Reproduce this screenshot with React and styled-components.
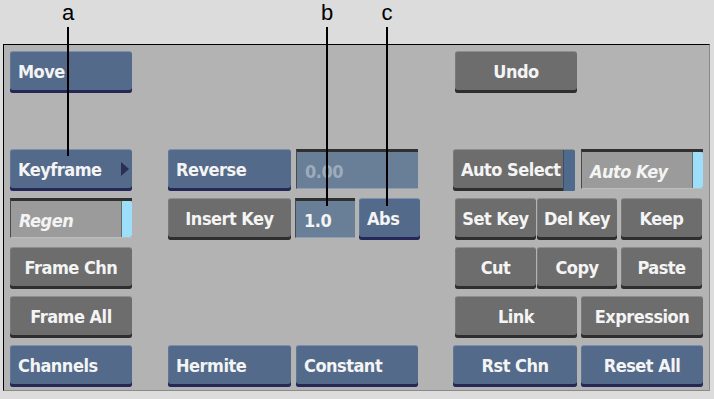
import styled, { createGlobalStyle, css } from 'styled-components';

const GlobalStyle = createGlobalStyle`
  html, body {
    margin: 0;
    padding: 0;
    background: #dcdcdc;
  }
  body {
    width: 714px;
    height: 399px;
    overflow: hidden;
    font-family: 'DejaVu Sans Condensed', 'DejaVu Sans', sans-serif;
  }
`;

const Page = styled.div`
  position: relative;
  width: 714px;
  height: 399px;
  padding: 44px 0 0 3px;
  box-sizing: border-box;
`;

// callout letter with its leader line, drawn over the panel
const Callout = styled.div`
  position: absolute;
  z-index: 2;
  top: 0;
  left: ${(p) => p.x}px;
  width: 0;
  height: ${(p) => p.len}px;

  span {
    position: absolute;
    top: 2px;
    left: -6px;
    width: 12px;
    text-align: center;
    font-family: 'Liberation Sans', Arial, sans-serif;
    font-size: 22px;
    line-height: 22px;
    color: #000;
  }

  &::after {
    content: '';
    position: absolute;
    left: -1px;
    top: 27px;
    bottom: 0;
    width: 2px;
    background: #000;
  }
`;

const Panel = styled.div`
  width: 707px;
  height: 347px;
  box-sizing: border-box;
  border: 1px solid #000;
  border-right-color: #8a8a8a;
  border-bottom-color: #8a8a8a;
  background: #b3b3b3;
  display: flex;
  padding: 6px 0 0 6px;
`;

const Group = styled.div`
  display: grid;
  grid-template-rows: repeat(7, 42px);
  row-gap: 7px;
  width: ${(p) => p.w}px;
  margin-left: ${(p) => p.ml || 0}px;
`;

const Row = styled.div`
  display: flex;
  gap: ${(p) => (p.gap === undefined ? 4 : p.gap)}px;
  grid-row: ${(p) => p.row};
  padding-left: ${(p) => p.pl || 0}px;
`;

const textBase = css`
  font-family: 'DejaVu Sans Condensed', 'DejaVu Sans', sans-serif;
  font-weight: bold;
  font-size: 18px;
  letter-spacing: -0.5px;
  color: #f4f4f4;
  white-space: nowrap;
`;

const Button = styled.div`
  ${textBase};
  position: relative;
  box-sizing: border-box;
  width: ${(p) => p.w}px;
  height: 42px;
  display: flex;
  align-items: center;
  justify-content: ${(p) => (p.left ? 'flex-start' : 'center')};
  padding: ${(p) => (p.left ? '0 0 3px 8px' : '0 0 3px 0')};
  margin-left: ${(p) => p.ml || 0}px;
  border-radius: 3px;
  background: ${(p) => (p.blue ? '#536a8a' : '#6d6d6d')};
  border-top: 1px solid ${(p) => (p.blue ? '#7a90ad' : '#8e8e8e')};
  box-shadow: inset 0 -3px 0 ${(p) => (p.blue ? '#252856' : '#2e2e2e')},
    inset 1px 0 0 ${(p) => (p.blue ? '#60779a' : '#7a7a7a')};
  grid-row: ${(p) => p.row || 'auto'};
`;

const Arrow = styled.span`
  position: absolute;
  right: 3px;
  top: 12px;
  width: 0;
  height: 0;
  border-top: 7px solid transparent;
  border-bottom: 7px solid transparent;
  border-left: 8px solid #2a3054;
`;

const Strip = styled.span`
  position: absolute;
  top: 0;
  right: 0;
  bottom: 0;
  width: ${(p) => p.w}px;
  background: ${(p) => p.color};
  border-left: 1px solid ${(p) => p.edge};
  border-radius: 0 2px 2px 0;
`;

const Field = styled.div`
  ${textBase};
  position: relative;
  box-sizing: border-box;
  width: ${(p) => p.w}px;
  height: 40px;
  display: flex;
  align-items: center;
  padding: 2px 0 0 ${(p) => p.pl || 8}px;
  background: ${(p) => (p.grey ? '#9b9b9b' : '#687f97')};
  border-top: 3px solid #303030;
  border-left: 1px solid #4a4a4a;
  border-bottom: 1px solid ${(p) => (p.grey ? '#bdbdbd' : '#8f9fb1')};
  color: ${(p) => (p.dim ? '#9eabba' : '#f4f4f4')};
  font-style: ${(p) => (p.italic ? 'italic' : 'normal')};
`;

export default function App() {
  return (
    <>
      <GlobalStyle />
      <Page>
        <Callout x={68} len={156}>
          <span>a</span>
        </Callout>
        <Callout x={327} len={206}>
          <span>b</span>
        </Callout>
        <Callout x={387} len={206}>
          <span>c</span>
        </Callout>

        <Panel>
          <Group w={122}>
            <Button blue left row={1} w={122}>Move</Button>
            <Button blue left row={3} w={122}>
              Keyframe
              <Arrow />
            </Button>
            <Row row={4}>
              <Field grey italic w={122}>
                Regen
                <Strip w={10} color="#9ddffa" edge="#6a6a6a" />
              </Field>
            </Row>
            <Button row={5} w={122}>Frame Chn</Button>
            <Button row={6} w={122}>Frame All</Button>
            <Button blue left row={7} w={122}>Channels</Button>
          </Group>

          <Group w={251} ml={36}>
            <Row row={3} gap={5}>
              <Button blue left w={123}>Reverse</Button>
              <Field dim w={122}>0.00</Field>
            </Row>
            <Row row={4} gap={4}>
              <Button w={123}>Insert Key</Button>
              <Field w={60}>1.0</Field>
              <Button blue left w={61}>Abs</Button>
            </Row>
            <Row row={7} gap={5}>
              <Button blue left w={123}>Hermite</Button>
              <Button blue left w={122}>Constant</Button>
            </Row>
          </Group>

          <Group w={251} ml={34}>
            <Row row={1} pl={2}>
              <Button w={122}>Undo</Button>
            </Row>
            <Row row={3} gap={6}>
              <Button left w={122}>
                Auto Select
                <Strip w={11} color="#4f6a8c" edge="#3c4f6a" />
              </Button>
              <Field grey italic w={122}>
                Auto Key
                <Strip w={10} color="#9ddffa" edge="#6a6a6a" />
              </Field>
            </Row>
            <Row row={4} pl={2} gap={1}>
              <Button w={81}>Set Key</Button>
              <Button w={80}>Del Key</Button>
              <Button w={81} ml={3}>Keep</Button>
            </Row>
            <Row row={5} pl={2} gap={1}>
              <Button w={81}>Cut</Button>
              <Button w={80}>Copy</Button>
              <Button w={81} ml={3}>Paste</Button>
            </Row>
            <Row row={6} pl={2} gap={4}>
              <Button w={122}>Link</Button>
              <Button w={122}>Expression</Button>
            </Row>
            <Row row={7} gap={4}>
              <Button blue w={124}>Rst Chn</Button>
              <Button blue w={122}>Reset All</Button>
            </Row>
          </Group>
        </Panel>
      </Page>
    </>
  );
}
